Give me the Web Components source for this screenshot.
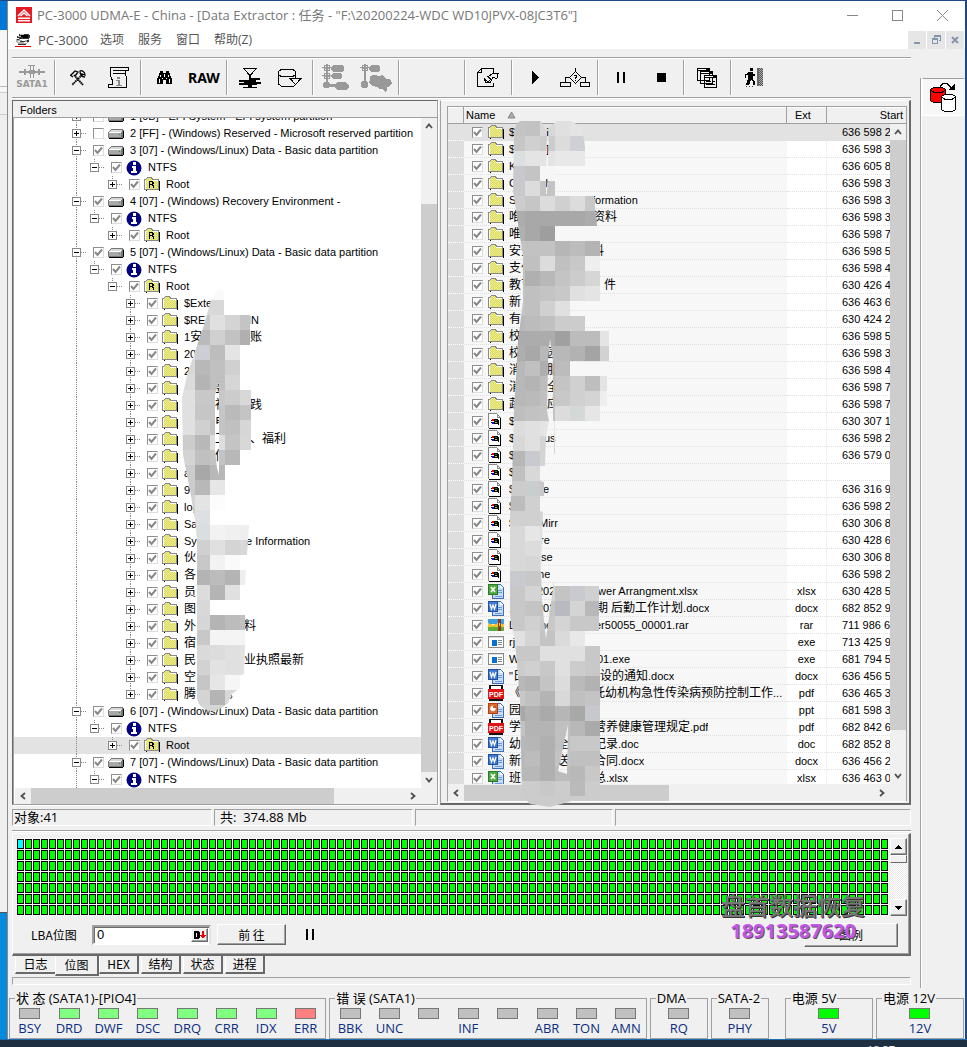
<!DOCTYPE html>
<html lang="zh-CN">
<head>
<meta charset="utf-8">
<title>PC-3000 UDMA-E</title>
<style>
html,body{margin:0;height:100%}
body{
  --face:#f0f0f0; --line:#a0a0a0; --dark:#696969; --hi:#fff;
  --narrow:"Liberation Sans","Noto Sans CJK SC",sans-serif;
  --segoe:"Open Sans","Noto Sans CJK SC",sans-serif;
  --cjk:"Noto Sans CJK SC",sans-serif;
  font:12px/16px var(--cjk);color:#000;overflow:hidden}
</style>
</head>
<body>
<desk-top>
  <app-window>
    <title-bar slot="title">PC-3000 UDMA-E - China - [Data Extractor : 任务 - "F:\20200224-WDC WD10JPVX-08JC3T6"]</title-bar>
    <menu-bar slot="menu"></menu-bar>
    <tool-bar slot="main"></tool-bar>
    <explorer-split slot="main">
      <folder-tree slot="left"></folder-tree>
      <file-list slot="right"></file-list>
    </explorer-split>
    <status-strip slot="main"><span>对象:41</span><span slot="b">共:&nbsp; 374.88 Mb</span></status-strip>
    <sector-map slot="main"></sector-map>
    <tab-strip slot="main"></tab-strip>
    <side-strip slot="side"></side-strip>
    <led-bar slot="leds"></led-bar>
  </app-window>
</desk-top>
<script>
const make=(tag,html,setup)=>customElements.define(tag,class extends HTMLElement{
  constructor(){super();const t=document.createElement('template');t.innerHTML=html;
    this.attachShadow({mode:'open'}).append(t.content.cloneNode(true));
    if(setup)setup.call(this,this.shadowRoot);}
});
const S=(w,h,body,extra='')=>`<svg width="${w}" height="${h}" viewBox="0 0 ${w} ${h}" shape-rendering="crispEdges" fill="none" aria-hidden="true" ${extra}>${body}</svg>`;

/* desktop behind the window */
make('desk-top',`<style>
:host{display:flex;flex-direction:column;height:100vh;box-sizing:border-box;padding:1px 2px 0 8px;
 background:linear-gradient(#1f4785,#1f4785) 0 0/100% 1px no-repeat,
 linear-gradient(#0078d7 0 30px,#f6f6f6 30px 86px,#bbb 86px 87px,#f6f6f6 87px 92px,#ccc 92px 93px,#f0f0f0 93px 114px,#ccc 114px 115px,#eee 115px 912px,#555 912px 913px,#068bdc 913px) 0 0/7px 100% no-repeat,
 linear-gradient(#8a8a8a,#8a8a8a) 7px 0/1px 100% no-repeat,#1f4785}
::slotted(*){flex:1;min-height:0}
footer{height:8px;overflow:hidden;background:#1d2f40;margin:0 -2px 0 -8px;color:#eee;text-align:right;font:11px/20px "Noto Sans",sans-serif;border-top:1px solid #1e6cae;box-sizing:border-box}
span{margin-right:72px}
</style><slot></slot><footer><span>18:37</span></footer>`);

make('app-window',`<style>
:host{display:flex;flex-direction:column;background:var(--face)}
.body{display:flex;flex:1;min-height:0}
main{flex:1;display:flex;flex-direction:column;min-width:0;min-height:0;padding:8px 9px 5px 4px}
::slotted(explorer-split){flex:1;min-height:0}
</style><slot name="title"></slot><slot name="menu"></slot>
<div class="body"><main><slot name="main"></slot></main><slot name="side"></slot></div><slot name="leds"></slot>`);

make('title-bar',`<style>
:host{display:flex;align-items:center;height:30px;box-sizing:border-box;padding-bottom:2px;background:#fff;padding-left:8px;color:#777;font:13px/18px var(--segoe)}
h1{font:inherit;margin:0 0 0 5px;flex:1;white-space:nowrap;overflow:hidden}
button{border:0;background:none;padding:0;width:45px;height:28px;display:grid;place-items:center}
</style>${S(16,16,`<path fill="#e31b23" d="M0 0h16v16H0z"/><g shape-rendering="auto" stroke="#fff"><path stroke-width="1.5" d="M2 9l6-6 6 6M4.500 9L8 6l3.500 3M2 11.200h12M2 13.700h12"/></g>`)}
<h1><slot></slot></h1>
<button aria-label="Minimize">${S(11,11,'<path stroke="#888" d="M0 5.500h11"/>')}</button>
<button aria-label="Maximize">${S(11,11,'<path stroke="#888" d="M.5.5h10v10H.5z"/>')}</button>
<button aria-label="Close">${S(11,11,'<path shape-rendering="auto" stroke="#888" d="M0 0l11 11M11 0L0 11"/>')}</button>`);

make('menu-bar',`<style>
:host{display:block;background:#fff;height:18px;font:12px/18px var(--segoe);color:#555}
nav{display:flex;align-items:center;height:18px;padding-left:7px}
a{color:inherit;text-decoration:none;margin-right:14px;white-space:nowrap}
a:first-of-type{margin-left:7px;font-size:13px;width:48px}
span{flex:1}
button{border:0;background:#e6e6e6;width:18px;height:18px;margin-right:1px;padding:0;display:grid;place-items:center}
</style><nav>${S(16,14,'<path fill="#333" d="M4 1h10v1h1v3h-1v1H4V5H2V3h2z"/><path fill="#bbb" d="M5 1h4v1H5zM3 3h3v1H3z"/><path fill="#000" d="M6 2h7v3H8V4H6z"/><path fill="#aaa" d="M1 6h3l4 2 6-2v3l-4 3H4L1 9z"/><path fill="#fff" d="M3 8h3v1H3zM9 9h3v1H9z"/><path fill="#333" d="M2 6h2v1H2zM5 8h5v1H5zM12 7h2v2h-2zM3 11h8v1H3z"/><path fill="#e00" d="M0 13h16v1H0z"/>')}
<a href="#">PC-3000</a><a href="#">选项</a><a href="#">服务</a><a href="#">窗口</a><a href="#">帮助(Z)</a><span></span>
<button aria-label="Minimize child">${S(10,10,'<path fill="#8496ae" d="M2 7h6v2H2z"/>')}</button>
<button aria-label="Restore child">${S(10,10,'<path stroke="#8496ae" d="M3.500 3V1.500h6v4H8M1.500 4.500h5v4h-5z"/><path fill="#8496ae" d="M3 0h7v2H3zM1 3h6v2H1z"/>')}</button>
<button aria-label="Close child">${S(10,10,'<path shape-rendering="auto" stroke="#8496ae" stroke-width="2" d="M2 2l6 6M8 2L2 8"/>')}</button></nav>`);

const K='stroke="#000"';
const T={
 sata:S(30,14,'<path fill="#9a9a9a" d="M2 6h26v2H2zM7 4h2v6H7zM21 4h2v6h-2zM13 1h1v12h-1zM16 1h1v12h-1zM11 0h7v1h-7zM12 5h6v4h-6z"/>'),
 tools:S(16,16,`<g shape-rendering="auto"><path ${K} stroke-width="1.800" stroke-dasharray="1.500 .5" d="M4 5l9 10M12 5L2 15"/><path ${K} stroke-width="1.300" d="M1 5l4-4 3 1-3 4M10 1c2-1 5 1 5 4l-3-1v2l3 1c-3 0-5-2-5-6zM0 5l3 2"/></g>`),
 script:S(23,23,`<path ${K} d="M3.500 7.500v-6h18v3h-3v4c3 4 0 6 1 9v4h-18v-3h4v-4c-3-4-1-5-2-7zM21 1.500v3M6 4.500h12M6 7.500h12M2 21.500h17"/><path fill="#888" d="M10 11h3v2h-3zM9 14h4v5h2v1H9v-1h2v-4H9z"/>`),
 find:S(17,14,'<path fill="#000" d="M4 0h3v2h3V0h3v2h1v3h1v2h1v6h-6V9H7v4H1V7h1V5h1V2h1z"/><path fill="#fff" d="M4 4h1v2H4zM12 4h1v2h-1zM3 8h1v4H3zM13 8h1v4h-1zM8 3h1v3H8zM6 7h1v1H6zM10 7h1v1h-1z"/>'),
 save:S(24,20,`<path ${K} d="M5.500.5h13l-6.500 7z"/><path fill="#000" d="M11 7h2v3h9v2h-4v2h5v2h-4v1h-5v2h5v1H5v-1h5v-2H1v-2h5v-1H1v-2h10z"/>`),
 disk:S(24,18,`<path ${K} d="M.5 2.500L3 .5h12l2.500 2v3L15 7.500H3L.5 5.500zM.5 5v10l2.500 2h13l2-2M17.500 5v4"/><path fill="#f0f0f0" ${K} d="M12 9.500h11l-5.500 6z"/>`),
 tree1:S(28,28,'<path fill="#999" d="M2 1h6v6H2zM2 9h6v6H2zM11 1h9l2 2v3l-2 2h-9L9 5V3zM11 9h7l2 2v2l-2 2h-7l-2-2v-2zM4 0h2v20H4zM0 3h10v1H0zM0 11h10v1H0zM2 18h5v1h1v4H7v1H2v-1H1v-4h1zM7 20h6l2-2h8l4 3v2l-3 3H15l-3-3H7z"/><path fill="#f0f0f0" d="M3 2h1v1H3zM6 2h1v1H6zM3 5h1v1H3zM6 5h1v1H6zM3 10h1v1H3zM6 10h1v1H6zM3 13h1v1H3zM6 13h1v1H6z"/>'),
 tree2:S(32,28,'<path fill="#999" d="M2 1h6v6H2zM11 1h7l2 2v3l-2 2h-7L9 5V3zM4 0h2v20H4zM0 3h10v1H0zM2 17h5v1h1v5H7v1H2v-1H1v-5h1zM10 12l4-1 5 1 4-1 3 4h4l2 4-2 3-3 1v4l-2 1-2-3h-4l-2-2-5-1-3-3 1-4z"/><path fill="#f0f0f0" d="M3 2h1v1H3zM6 2h1v1H6zM3 5h1v1H3zM6 5h1v1H6z"/>'),
 exp:S(22,20,`<path ${K} d="M16.500 6V.5h-12l-4 4v14h16V15M4.500.5v4h-4M7 10.500l4 3 3-2-3-3 5-3h5l-1 5-4-1-3 5h-4z"/>`),
 play:S(7,13,'<path fill="#000" d="M0 0h1v1h1v1h1v1h1v1h1v1h1v1h1v1H6v1H5v1H4v1H3v1H2v1H1v1H0z"/>'),
 flow:S(30,20,`<path ${K} d="M15.500 0v3M9.500 9.500l6-6 6 6-6 6zM5.500 14V9.500h4M21 9.500h4.500V14M.5 14.500h10v4H.5zM20.500 14.500h9v4h-9zM14 7.500h2v2h-1v1M15 12.500h1"/>`),
 pause:S(8,11,'<path fill="#000" d="M0 0h2v11H0zM6 0h2v11H6z"/>'),
 stop:S(9,9,'<path fill="#000" d="M0 0h9v9H0z"/>'),
 wins:S(20,20,`<g fill="#f0f0f0" ${K}><path d="M.5.5h12v12H.5zM3.500 3.500h12v12h-12zM7.500 7.500h12v12h-12z"/></g><path fill="#000" d="M0 0h13v3H0zM3 3h13v3H3zM7 7h13v3H7zM9 13h5v1H9zM16 13h2v1h-2zM9 16h9v1H9z"/><path fill="#fff" d="M1 1h8v1H1zM4 4h8v1H4zM8 8h8v1H8z"/>`),
 exit:S(19,19,'<path fill="#000" d="M5 0h3v3H5zM3 4h5v2h2v2H8v3l2 3v3H8v-3l-2-2-2 5H1v-2h1l1-5V7H1v3H0V6h2z"/><path fill="#444" d="M1 18h1v1H1zM4 18h1v1H4zM7 18h1v1H7z"/><path fill="#666" d="M12 0h2v18h-2z"/><path fill="#aaa" d="M14 0h4v18h-4z"/><path stroke="#555" stroke-dasharray="1 1" d="M14.500 0v18M16.500 0v18"/><path stroke="#555" stroke-dasharray="1 1" stroke-dashoffset="1" d="M15.500 0v18M17.500 0v18"/>')
};
const tb=(n,l)=>`<button aria-label="${l}">${T[n]}</button>`;
make('tool-bar',`<style>
:host{display:flex;height:41px;border-top:1px solid var(--line);border-bottom:1px solid var(--line);box-shadow:inset 0 1px #fff,0 1px #fff;box-sizing:border-box;margin-bottom:2px;align-items:center;flex:none}
.g{display:flex;height:35px;border-left:1px solid var(--line);box-shadow:inset 1px 0 #fff;padding:0 2px 0 3px}
.g:first-of-type{border:0;padding:0;box-shadow:none;width:42px}
.one{padding-right:3px}
.void{width:60px}
button{border:0;background:none;padding:0;width:40px;display:flex;flex-direction:column;align-items:center;justify-content:center}
b{font:bold 9px/11px "DejaVu Sans",sans-serif;color:#9a9a9a}
.raw{font:bold 14px/20px "Noto Sans",sans-serif}
</style>
<div class="g"><button>${T.sata}<b>SATA1</b></button></div>
<div class="g">${tb('tools','Settings')}${tb('script','Log')}</div>
<div class="g">${tb('find','Find')}<button class="raw">RAW</button></div>
<div class="g">${tb('save','Save')}${tb('disk','Open disk')}</div>
<div class="g">${tb('tree1','Tree')}${tb('tree2','Map')}</div>
<div class="g void"></div>
<div class="g one">${tb('exp','Export')}</div>
<div class="g">${tb('play','Start')}${tb('flow','Options')}</div>
<div class="g">${tb('pause','Pause')}${tb('stop','Stop')}</div>
<div class="g one">${tb('wins','Windows')}</div>
<div class="g">${tb('exit','Exit')}</div>`);

make('explorer-split',`<style>
:host{display:grid;gap:2px;grid-template-columns:minmax(0,426fr) minmax(0,471fr);grid-template-rows:minmax(0,1fr)}
</style><slot name="left"></slot><slot name="right"></slot>`);

/* scroll bar: flat style, thumb given as start/end in percent of the track */
make('scroll-bar',`<style>
:host{display:flex;background:#f0f0f0;width:16px;flex-direction:column}
:host([flat]){width:auto;height:16px;flex-direction:row}
button{border:0;background:none;padding:0;width:16px;height:16px;display:grid;place-items:center;flex:none}
.t{flex:1;display:flex;flex-direction:inherit}
.t i{background:#cdcdcd}
svg{transform:rotate(var(--r))}
.a{--r:0deg}.z{--r:180deg}
:host([flat]) .a{--r:-90deg}:host([flat]) .z{--r:90deg}
</style><button class="a" aria-label="Scroll back">${S(8,8,'<path shape-rendering="auto" stroke="#505050" stroke-width="1.800" d="M1 6l3-3.500L7 6"/>')}</button>
<div class="t"><s></s><i></i><u></u></div>
<button class="z" aria-label="Scroll on">${S(8,8,'<path shape-rendering="auto" stroke="#505050" stroke-width="1.800" d="M1 6l3-3.500L7 6"/>')}</button>`,
function(r){const a=+this.getAttribute('from'),b=+this.getAttribute('to');
 r.querySelector('s').style.flex=a+' 1 0';r.querySelector('i').style.flex=(b-a)+' 1 0';r.querySelector('u').style.flex=(100-b)+' 1 0';});

/* 15px mosaic blocks laid over private names */
const L={w:80,h:430,x:180,y:285,
 clip:'M218 288L224 291V300V315H250V345H240V390H251V450H240V465H225V495H225V525H249L247 555H240V570H246L245 585H240V600H210V615H245V645L244 674L240 676V688L232 694Q229 700 228 703Q220 711 210 711Q198 708 197 698V540L195 520L190 490L183 455L182 398L187 375L204 325L211 300Z M219 382L215 395V450L217 468L219 475Z',
 rows:`fafafa:fafafa:fafafa:fafafa
d8:d8:d8:d8
c8:c8:e0:d4:c4
ba:ba:d0:c2:b0
dcdfe6:cdced4:bd:e4
d8:b8:c0:d0
dc:b4:c0:d6
e0:c8:c8:cc:d8
e0:c6:c6:ba:c4
e0:d0:c4:c0:d6
cc:b8:de:c4:d8
d4:c0:c4:b8
cc:a8:b8
cc:b8:e6
d4:e4:fc
d4:dde0e2:ff
d4:d9dee0:f2:f0:ee
d0:d0:e0:d4:d8
c8:c8:f2:fa
b4:b4:bc:b4:ee
dc:dc:b4:e0
d8:d8:ff
d6:d6:b4:bc:c0
c8:c8:f4:f4:f4
da:da:dc:e0:e2
d2:d2:e2:e0:e2
c6:c6:e6:f6
d4:d4:b4:d8
d6:d6:d6:d8`};
const R={w:110,h:700,x:510,y:120,
 clip:'M517 122Q530 114 541 120L545 128L549 128Q555 118 566 118Q580 122 583 133L585 145V165H555V195H594L597 225H555V240H600L604 270L606 300H570V315H585V330H609V360H570V375H607V405H600V420H555V453H554V420H549L546 435L545 465H540V480L544 481V495H540V510L543 511L541 570L542 600L546 638L554 580V585H599V630H585V645H600V795L590 800L572 800L550 806L530 803L522 795L520 700L515 640L509 610V530L512 480L514 410L518 340L523 300L523 255L516 210L513 190L514 130Z M547 130L546 193L547 193L549 130Z M550 338L548 360L547 410L549 420H553V360Z M568 724L558 770L567 773Z',
 rows:`c4:c2:d8:e0:e4
c6:d0:cc:dc:cfd0d4
dcdfe0:e4:e4:e8:e8
c9c9cd:c4:f6
c9c9cd:dc:c4
cc:c6:dc:d0:dc:c8
ac:a8:a8:a8:a8:ac
b0:a8:9e:f6
c4:c2:c2:b6:bc:b4
c4:c0:dc:c0:c8:ee
c0:b0:b8:c4:cc:d6
c4:c0:c4:c8:e0:e4
c4:c0:d0:e0
b8:bc:c0:cc:cc
ac:ac:ac:a0:bc:bc:e4
ae:a8:b8:b8:b2:a4:d2
b8:c0:ae:bc
b8:b4:bc:c4:d0:be:e4
b8:ba:c0:c8:d0:d4:ee
be:c2:c4:dc:d4d8d6:e6
dc:e0:e4:e4
d8:e0:d4
b6:c9cad0:d4
c0:d8
cc:c9cdcd:c8
bc:d0
d0:d0:d4
d8:e6:e0
d8:dc:e0
d8:d6:e0
c8cad0:c8:c8
c8:d4:d4:c4:c9cad0:d0
c8:c4:c4:b9bac0:d4:b8
c8:d0:c8:d4:c8:c8
e0:d4:c4:da:e8
c8:c8:e0:e0:e0:c8
cc:d0:c8:e0:cc:c8
b8:b4:c4:dc:ba:b2
c8:c0:b4:d8:c0:c4
a8:b2:aa:b6:a8:c6c8cc
c2:b4:b4:c0:b8:aa
b8:b6:b0:c0:c8:c8
b8:bc:b0:c4:c0:c0
b8:b8:b0:bc:b8:c8
cc:cc:c8:cc:ba:cc
cc:cc:cc:cc:cc:cc`};
const mosaic=(m,oy)=>{const id='c'+m.x;let o='';
 m.rows.split('\n').forEach((r,j)=>r.split(':').forEach((c,i)=>{o+=`<rect x="${m.x+15*i}" y="${m.y+15*j}" width="15" height="15" fill="#${c.length<6?c.repeat(3):c}"/>`}));
 return `<svg class="veil" aria-hidden="true" width="${m.w}" height="${m.h}" viewBox="${m.x-2} ${oy} ${m.w} ${m.h}" shape-rendering="crispEdges"><clipPath id="${id}"><path clip-rule="evenodd" d="${m.clip}"/></clipPath><g clip-path="url(#${id})">${o}</g></svg>`};

const dots=`<pattern id="dt" width="2" height="2" patternUnits="userSpaceOnUse"><path fill="#ffff00" d="M0 0h2v2H0z"/><path fill="#c8c8f0" d="M0 0h1v1H0zM1 1h1v1H1z"/></pattern>`;
const folder=(r='')=>S(16,15,`<defs>${dots}</defs><path fill="#000" d="M3 14h13V4h-1v9H3z M2 13h13v1H2z"/><path fill="#888" d="M1 2h1V1h1V0h5v1h1v1h6v11H0V2z"/><path fill="#fff" d="M1 3h13v9H1z"/><path fill="url(#dt)" d="M2 2h1V1h4v1h1v1h6v9H2z"/><path fill="#fff" d="M1 4h7V3h6v1H2v8H1z"/>${r}`);
const ICON={
 folder:folder(),
 root:folder('<path fill="#000" d="M5 4h4v1h1v2H9v1h1v3H9V9H8V8H6v3H5zM6 5v2h2V5z"/>'),
 ntfs:S(16,16,'<circle shape-rendering="auto" cx="8" cy="8" r="7.500" fill="#000080"/><path fill="#fff" d="M7 2h3v3H7zM6 6h4v5h1v2H5v-2h2V8H6z"/>'),
 drive:S(17,12,'<path fill="#777" d="M3 1h12v1h1v8h-1v1H1v-1H0V4h1V3h1V2h1z"/><path fill="#d8d8d8" d="M3 2h11v2H2V3h1z"/><path fill="#a8a8a8" d="M1 5h12v4H1z"/><path fill="#000" d="M15 3h1v7h-1zM1 10h14v1H1z"/><path fill="#0a0" d="M11 6h1v1h-1z"/><path fill="#fff" d="M1 4h12v1H1z"/>'),
 win:S(14,16,'<path fill="#888" d="M0 0h9v1H1v14H0z"/><path fill="#fff" d="M1 1h8v4h3v10H1z"/><path fill="#888" d="M9 1h1v1h1v1h1v1h1v1H9z"/><path fill="#fff" d="M10 3h1v1h-1z"/><path fill="#000" d="M12 5h1v10h-1zM1 15h12v1H1z"/><path fill="#000" d="M3 7h1v1H3zM3 9h1v1H3zM6 6h4v1h1v5h-1v-1H6z"/><path fill="#e00" d="M4 6h2v2H4z"/><path fill="#080" d="M7 7h2v1H7z"/><path fill="#11c" d="M4 9h2v2H4z"/><path fill="#cc0" d="M7 9h2v1H7z"/>'),
 exe:S(16,14,'<path fill="#888" d="M0 1h16v12H0z"/><path fill="#fff" d="M1 3h14v9H1z"/><path fill="#ddd" d="M1 2h14v1H1z"/><path fill="#0a70d0" d="M4 5h5v6H4z"/><path fill="#888" d="M10 5h4v1h-4zM10 7h4v1h-4zM10 9h4v1h-4z"/>'),
 rar:S(16,14,'<path fill="#3ea0e0" d="M0 1h16v5H0z"/><path fill="#f4c430" d="M0 5l5 2 5-2 6 1v4H0z"/><path fill="#5fae3a" d="M0 9h16v4H0z"/><path fill="#8a3a1a" d="M10 1h3v12h-3z"/><path fill="#f0d080" d="M11 5h1v3h-1z"/>'),
 pdf:S(16,16,'<path fill="#111" d="M1 0h14v5H1zM1 14h14v2H1z"/><path fill="#fff" d="M3 1h10v3H3z"/><path fill="#e01414" d="M0 4h16v10H0z"/><text x="8" y="12" text-anchor="middle" fill="#fff" font-family="Liberation Sans" font-weight="bold" font-size="7">PDF</text>')
};
const office=(ch,c,d)=>S(16,16,`<path fill="#3c6cb4" d="M5 1h7l4 4v11H4v-4h1z"/><path fill="#c8dcf8" d="M5 2h7v3h3v10H5z"/><path fill="#fff" d="M12 2l3 3h-3z"/><path fill="#6f9ade" d="M10 7h4v1h-4zM10 9h4v1h-4zM7 13h7v1H7z"/><path fill="${d}" d="M0 1h10v11H0z"/><path fill="${c}" d="M1 2h8v9H1z"/>${ch}`);
ICON.xls=office('<path shape-rendering="auto" stroke="#fff" stroke-width="1.600" d="M3 4l4 5M7 4L3 9"/>','#4fa83a','#2b7a2b');
ICON.doc=office('<path shape-rendering="auto" stroke="#fff" stroke-width="1.200" d="M2 4l1.500 5L5 5l1.500 4L8 4"/>','#3f78d0','#1f4fa0');
ICON.ppt=office('<circle shape-rendering="auto" cx="5" cy="6.500" r="2.700" fill="#fff"/><path fill="#d2521e" d="M5 4h3v2H5z"/>','#d96a32','#b04014');

const CHECK=`input{appearance:none;margin:0;width:11px;height:11px;box-sizing:border-box;border:1px solid #8e8e8e;border-right-color:#ddd;border-bottom-color:#ddd;background:#fff;flex:none}
input:checked{background:#fff url('data:image/svg+xml,<svg xmlns="http://www.w3.org/2000/svg" width="9" height="9"><path d="M1 4l2.500 3L8 1.500" fill="none" stroke="%23888" stroke-width="2"/></svg>') no-repeat}
em{font-style:normal;font-size:12px}`;
/* Chinese runs are set one pixel larger than the Latin text */
const han=t=>t.replace(/[\u3000-\u9fff]+/g,'<em>$&</em>');
/* names are arrays: text, then pairs of (width of everything before it, text) */
const segs=n=>{if(typeof n==='string')return han(n);let o='',w=0;
 for(let i=0;i<n.length;i+=2){const nx=n[i+1];o+=nx?`<span style="width:${nx-w}px">${han(n[i])}</span>`:`<span>${han(n[i])}</span>`;w=nx}return o};

const part=(t,open,on=1)=>({l:0,k:'drive',t,open,on});
const nt={l:1,k:'ntfs',t:'NTFS',open:1,on:1};
const rt=(o,extra={})=>({l:2,k:'root',t:'Root',open:o,on:1,...extra});
const subs=['$Exte',['$RE',64,'IN'],['1安',66,'账'],'20','2',['',31,'委'],['',31,'社',66,'践'],['',31,'电'],['',31,'工',66,'、福利'],['',31,'信'],'a','9','log','Sa',['Sys',62,'e Information'],'伙','各','员','图',['外',60,'料'],'宿',['民',60,'业执照最新'],'空',['腾',44,'。']];
const TREE=[part('1 [0B] - EFI System - EFI system partition',0,0),part('2 [FF] - (Windows) Reserved - Microsoft reserved partition',0,0),
 part('3 [07] - (Windows/Linux) Data - Basic data partition',1),nt,rt(0),
 part('4 [07] - (Windows) Recovery Environment - ',1),nt,rt(0),
 part('5 [07] - (Windows/Linux) Data - Basic data partition',1),nt,rt(1),
 ...subs.map((t,i)=>({l:3,k:'folder',t,open:0,on:1,last:i==23})),
 part('6 [07] - (Windows/Linux) Data - Basic data partition',1),nt,rt(0,{sel:1}),
 part('7 [07] - (Windows/Linux) Data - Basic data partition',1),nt];
const twig=(d)=>{const x=62+18*d.l+.5;const ln=p=>`<path stroke="#888" stroke-dasharray="1 1" d="${p}"/>`;
 return S(90+18*d.l,17,(d.l?ln('M62.500 0v17'):'')+(d.l==3&&!d.last||!d.l?ln(`M${x} 0v17`):ln(`M${x} 0v8`))+ln(`M${x} 8.500h10`),'class="twig"')};
make('folder-tree',`<style>
:host{display:flex;flex-direction:column;position:relative;border:1px solid var(--dark);border-right-color:var(--line);border-bottom-color:var(--line);box-shadow:inset 1px 0 #a0a0a0,1px 1px #fff;box-sizing:border-box;background:#fff;font:11px/17px var(--narrow)}
h2{margin:0;font:inherit;height:17px;line-height:18px;background:var(--face);padding-left:7px;box-sizing:border-box;border-bottom:1px solid var(--line);flex:none;position:relative}
.mid{flex:1;display:flex;min-height:0;padding-left:1px}
.rows{flex:1;min-width:0;overflow:hidden}
ul{list-style:none;margin:-10px 0 0;padding:0}
li{display:flex;align-items:center;height:17px;position:relative;white-space:nowrap}
li.sel{background:#e3e3e3}
.twig{position:absolute;left:0;top:0}
li button{position:relative;width:9px;height:9px;padding:0;border:0;background:none;display:block;flex:none}
li button svg{display:block}
input{margin-left:12px!important}
label{display:flex;align-items:center}
.ic{width:18px;margin:0 4px;display:flex}
.tx span{display:inline-block;overflow:hidden;white-space:pre;vertical-align:top}
.foot{display:flex;flex:none}scroll-bar[flat]{flex:1;margin-left:2px}.foot i{width:16px;background:#f0f0f0}
.veil{position:absolute;left:165px;top:184px}
${CHECK}
</style><h2>Folders</h2><div class="mid"><div class="rows"><ul>${TREE.map((d,i)=>`<li class="${d.sel?'sel':''}" style="padding-left:${58+18*d.l}px">${twig(d)}<button aria-label="${d.open?'Collapse':'Expand'}">${S(9,9,`<path fill="#fff" stroke="#888" d="M.5.5h8v8h-8z"/><path fill="#000" d="M2 4h5v1H2z${d.open?'':'M4 2h1v5H4z'}"/>`)}</button><input type="checkbox" id="t${i}" ${d.on?'checked':''} aria-label="Include"><label for="t${i}"><span class="ic">${ICON[d.k]}</span><span class="tx">${segs(d.t)}</span></label></li>`).join('')}</ul></div><scroll-bar from="11" to="100"></scroll-bar></div>
<div class="foot"><scroll-bar flat from="0" to="81"></scroll-bar><i></i></div>
${mosaic(L,285)}`);

const N=[
['folder',['$',37,'I'],'','636 598 2'],['folder',['$',37,']'],'','636 598 3'],['folder','K','','636 605 8'],['folder',['C',36,'M'],'','636 598 3'],
['folder',['S',83,'formation'],'','636 598 3'],['folder',['唯',84,'资料'],'','636 598 3'],['folder','唯','','636 598 7'],['folder',['安全',83,'料'],'','636 598 5'],['folder','支付','','636 598 4'],['folder',['教育',95,'件'],'','630 426 4'],['folder','新','','636 463 6'],['folder','有','','630 424 2'],['folder','校','','636 598 5'],['folder',['校',38,'园'],'','636 598 3'],['folder',['消',38,'服'],'','636 598 4'],['folder',['消',38,'全'],'','636 598 7'],['folder',['蔬',38,'应'],'','636 598 7'],
['win','$','','630 307 1'],['win',['$',35,'us'],'','636 598 2'],['win','$','','636 579 0'],['win','$','',''],['win',['$',34,'e'],'','636 316 9'],['win','$','','636 598 2'],['win',['$',30,'Mirr'],'','630 306 8'],['win',['',31,'re'],'','630 428 6'],['win',['',26,'use'],'','630 306 8'],['win',['',26,'me'],'','636 598 2'],
['xls',['',28,'202',83,'ower Arrangment.xlsx'],'xlsx','630 428 5'],['doc',['1',28,'202',87,'期 后勤工作计划.docx'],'docx','682 852 9'],['rar',['L',31,'ne',86,'er50055_00001.rar'],'rar','711 986 6'],['exe','rj','exe','713 425 9'],['exe',['W',88,'01.exe'],'exe','681 794 5'],['doc',['"日',91,'设的通知.docx'],'docx','636 456 5'],['pdf',['《',84,'托幼机构急性传染病预防控制工作...'],'pdf','636 465 3'],['ppt','园','ppt','681 598 3'],['pdf',['学',85,'营养健康管理规定.pdf'],'pdf','682 842 6'],['doc',['幼',48,'全',85,'记录.doc'],'doc','682 852 8'],['doc',['新',48,'送',85,'合同.docx'],'docx','636 456 2'],['xls',['班',85,'总.xlsx'],'xlsx','636 463 0']];
make('file-list',`<style>
:host{display:flex;flex-direction:column;position:relative;box-sizing:border-box;border-left:1px solid var(--line);border-right:2px solid var(--dark);border-bottom:2px solid var(--dark);border-top:1px solid #fff;padding:5px 2px 1px 6px;font:11px/16px var(--narrow)}
.box{flex:1;display:flex;flex-direction:column;min-height:0;border:1px solid var(--line);border-bottom-color:#fff;box-sizing:border-box;position:relative}
.clip{flex:1;min-height:0;overflow:hidden;background:#fff}
table{border-collapse:separate;border-spacing:0;table-layout:fixed;width:100%}
td,th{padding:0;font-weight:400;text-align:left;white-space:nowrap;overflow:hidden}
th{height:17px;line-height:15px;padding-top:1px;background:var(--face);border-right:1px solid var(--line);border-bottom:1px solid var(--line);box-sizing:border-box;box-shadow:inset 0 1px #fff}
th:last-child{text-align:right;padding-right:3px;border-right:0}
th svg{margin-left:12px}
td{height:17px;box-sizing:border-box;border-bottom:1px dotted #e0e0e0;background:#fff}
td:first-child{background:#dedede;border-bottom-color:#fff}
td:nth-child(2){background:#f7f7f7}
td:nth-child(3){text-align:center;border-right:1px dotted #e4e4e4}
td:last-child{padding-left:15px}
tr.sel td{background:#e2e2e2}
.n{display:flex;align-items:center;height:16px}
.n input{margin:0 5px 0 8px}
label{display:flex;align-items:center}
.ic{width:17px;margin-right:4px;display:flex}
.tx span{display:inline-block;overflow:hidden;white-space:pre;vertical-align:top}
.v{position:absolute;right:0;top:17px;bottom:17px}
.foot{display:flex;flex:none;height:17px;padding-top:1px;box-sizing:border-box}
.foot i{width:16px;background:#f0f0f0}scroll-bar[flat]{flex:1}
.veil{position:absolute;left:67px;top:15px}
${CHECK}
</style><div class="box"><div class="clip"><table><colgroup><col style="width:16px"><col><col style="width:40px"><col style="width:79px"></colgroup>
<thead><tr><th></th><th style="padding-left:2px">Name${S(9,8,'<path shape-rendering="auto" fill="#aaa" stroke="#888" d="M1 7l3.500-6L8 7z"/>')}</th><th style="padding-left:8px">Ext</th><th>Start</th></tr></thead>
<tbody>${N.map((r,i)=>`<tr class="${i?'':'sel'}"><td></td><td><div class="n"><input type="checkbox" checked id="f${i}" aria-label="Select file"><label for="f${i}"><span class="ic">${ICON[r[0]]}</span><span class="tx">${segs(r[1])}</span></label></div></td><td>${r[2]}</td><td>${r[3]}</td></tr>`).join('')}</tbody></table></div>
<scroll-bar class="v" from="0" to="94"></scroll-bar>
<div class="foot"><scroll-bar flat from="0" to="50"></scroll-bar><i></i></div></div>${mosaic(R,115)}`);

make('status-strip',`<style>
:host{display:grid;grid-template-columns:200fr 199fr 198fr 296fr;gap:2px;margin-top:4px;height:22px;border-bottom:1px solid var(--line);box-shadow:0 1px #fff;font:13px/16px var(--segoe);flex:none;box-sizing:border-box}
div{height:17px;box-sizing:border-box;border:1px solid var(--line);border-right-color:#fff;border-bottom-color:#fff;white-space:nowrap;padding-left:1px;line-height:15px}
.b{padding-left:5px}
</style><div><slot></slot></div><div class="b"><slot name="b"></slot></div><div></div><div></div>`);

const arrow=f=>S(7,4,f?'<path fill="#000" d="M3 0h1v1h1v1h1v1h1v1H0V3h1V2h1V1h1z"/>':'<path fill="#000" d="M0 0h7v1H6v1H5v1H4v1H3V3H2V2H1V1H0z"/>');
make('sector-map',`<style>
:host{display:block;position:relative;flex:none;margin-top:2px;border:1px solid #fff;border-right:2px solid var(--dark);border-bottom:2px solid var(--dark);padding:4px 2px 7px 4px;box-shadow:inset -1px -1px #a0a0a0}
.top{display:flex;height:78px}
.cells{flex:1;min-width:0;background:#fff;padding-top:1px;overflow:hidden;display:block}
.cells svg{display:block}
.sb{width:17px;display:flex;flex-direction:column;background:repeating-conic-gradient(#fff 0 25%,#e8e8e8 0 50%) 0 0/2px 2px;margin-left:1px}
button{border:1px solid #fff;border-right-color:var(--dark);border-bottom-color:var(--dark);background:var(--face);box-shadow:inset -1px -1px #a0a0a0;padding:0;font:12px/18px var(--cjk)}
.sb button{height:17px;display:grid;place-items:center}
.sb i{height:8px;box-sizing:border-box;border:1px solid #fff;border-right-color:var(--dark);border-bottom-color:var(--dark);background:var(--face);flex:none}
.sb u{flex:1}
.ctl{display:flex;align-items:center;height:25px;margin-top:6px;padding:0 9px 0 14px;font:12px/18px var(--cjk)}
label{width:61px;white-space:nowrap}
.in{display:flex;width:119px;height:20px;box-sizing:border-box;border:2px solid;border-color:var(--line) #e4e4e4 #fff var(--line);box-shadow:inset 1px 1px #696969;background:#fff;padding:1px}
input{border:0;padding:0 0 0 2px;min-width:0;flex:1;font:13px/14px "Liberation Sans",sans-serif;background:none}
.in button{width:17px;display:grid;place-items:center}
.go{width:69px;height:21px;margin:0 20px 0 6px}
.leg{width:94px;height:24px;margin-left:auto}
.mark{position:absolute;right:44px;top:57px;text-align:right;pointer-events:none}
.mark p{margin:0;font:500 24px/28px var(--cjk);color:#777;text-shadow:1px 1px #333}
.mark p+p{font:bold 20px/24px "Open Sans",sans-serif;color:#c455e8;text-shadow:1px 1px #555;margin-right:9px}
</style><div class="top"><div class="cells">${`<svg width="872" height="77" shape-rendering="crispEdges" aria-hidden="true"><defs><pattern id="cell" width="8" height="11" patternUnits="userSpaceOnUse"><path fill="#000" d="M0 0h7v10H0z"/><path fill="#0f0" d="M1 1h5v8H1z"/></pattern></defs><path fill="url(#cell)" d="M0 0h872v77H0z"/><path fill="#0ff" d="M1 1h5v8H1z"/></svg>`}</div>
<div class="sb"><button aria-label="Up">${arrow(1)}</button><i></i><u></u><button aria-label="Down">${arrow(0)}</button></div></div>
<div class="ctl"><label for="lba">LBA位图</label><div class="in"><input id="lba" value="0"><button aria-label="Decimal">${S(12,8,'<path fill="#000" d="M0 0h5v1h1v6H5v1H0zM2 2v4h1V2z"/><path fill="#e00" d="M8 0h2v4h2L9 8 6 4h2z"/>')}</button></div>
<button class="go">前 往</button>${T.pause}<button class="leg">图例</button></div>
<div class="mark"><p>盘首数据恢复</p><p>18913587620</p></div>`);

make('tab-strip',`<style>
:host{display:block;flex:none}
div{display:flex;height:21px;padding-left:3px;align-items:flex-start}
button{border:1px solid #fff;border-top:0;border-right:2px solid var(--dark);border-bottom:2px solid var(--dark);background:var(--face);width:40px;height:18px;padding:0;margin-right:2px;font:12px/16px var(--cjk)}
.first{border-right:0;margin-right:0;width:40px}
.on{height:20px;width:44px;margin-right:0}
hr{margin:0;height:8px;box-sizing:border-box;border:1px solid var(--line);border-right-color:#fff;border-bottom-color:#fff}
</style><div role="tablist"><button role="tab" class="first">日志</button><button role="tab" class="on" aria-selected="true">位图</button><button role="tab">HEX</button><button role="tab">结构</button><button role="tab">状态</button><button role="tab">进程</button></div><hr>`);

make('side-strip',`<style>
:host{display:block;width:44px;margin:29px 0 2px;border-left:1px solid var(--line);box-shadow:inset 1px 0 #fff}
button{width:43px;height:38px;margin-left:1px;border:1px solid #fff;border-top-color:var(--line);border-bottom-color:#fff;background:#f7f7f7;padding:0;display:grid;place-items:center}
</style><button aria-label="Copy disk">${S(27,30,`<path fill="#f00" ${K} d="M.5 7.500l3-2h9l3 2v11l-3 2h-9l-3-2z"/><path ${K} d="M.5 8l3 2h9l3-2M10 4.500l3-3h4l3 3v2"/><path fill="#000" d="M25 1v7h-7z"/><path fill="#fff" ${K} d="M11.500 14.500l3-2h8l3 2v13l-3 2h-8l-3-2z"/><path ${K} d="M11.500 15l3 2h8l3-2"/>`)}</button>`);

const G=[['状 态 (SATA1)-[PIO4]','BSY DRD DWF DSC DRQ CRR IDX ERR','xggggggr'],['错 误 (SATA1)','BBK UNC _ INF _ ABR TON AMN','xxxxxxxx'],['DMA','RQ','x'],['SATA-2','PHY','x'],['电源 5V','5V','G'],['电源 12V','12V','G']];
make('led-bar',`<style>
:host{display:grid;grid-template-columns:minmax(0,317fr) minmax(0,317fr) minmax(0,58fr) minmax(0,58fr) 10px minmax(0,88fr) minmax(0,88fr);gap:3px;height:49px;box-sizing:border-box;flex:none;font:13px/16px var(--segoe);padding:0 1px}
fieldset{margin:0;padding:0;min-width:0;border:1px solid var(--line);display:block}
fieldset:nth-of-type(5){grid-column:6}
legend{padding:0 1px;margin-left:5px;height:16px;white-space:nowrap}
.r{display:flex;justify-content:space-around;padding-top:2px}
.r div{width:39px;display:flex;flex-direction:column;align-items:center;color:#0c2f80;line-height:18px}
i{width:21px;height:11px;box-sizing:border-box;border:1px solid #777;background:#c0c0c0}
.g{background:#80ff80}.rd{background:#ff8080}.G{background:#0f0}
</style>${G.map(g=>`<fieldset><legend>${g[0]}</legend><div class="r">${g[1].split(' ').map((t,j)=>`<div><i class="${g[2][j]=='r'?'rd':g[2][j]}"></i>${t=='_'?'&nbsp;':t}</div>`).join('')}</div></fieldset>`).join('')}`);
</script>
</body>
</html>
